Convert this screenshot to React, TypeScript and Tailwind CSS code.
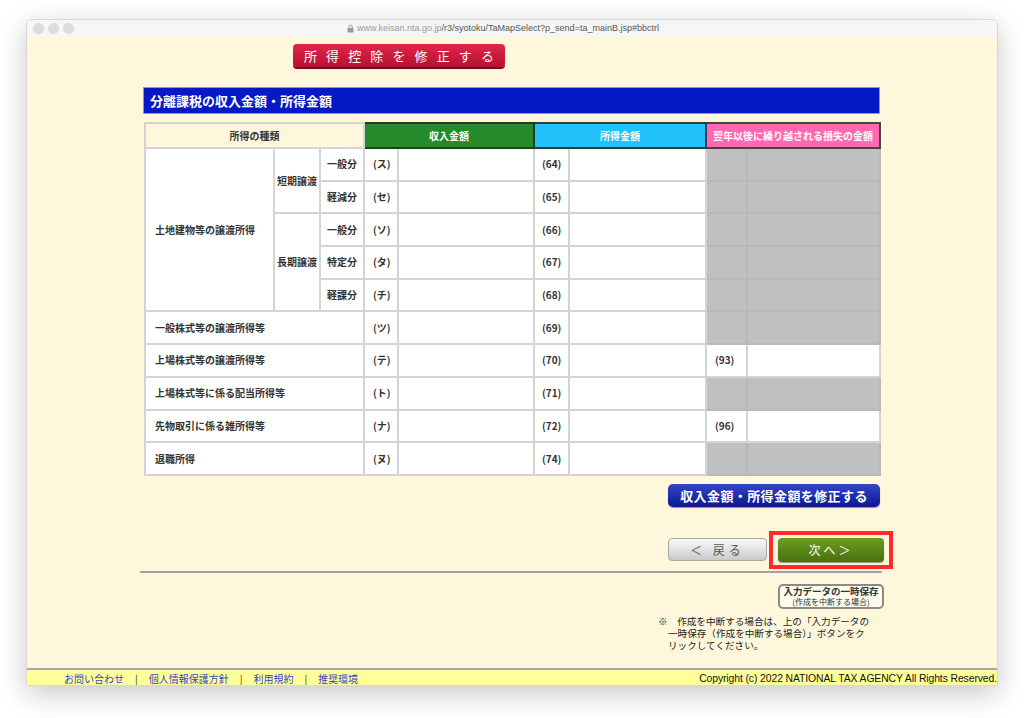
import React from "react";

const jp = "font-['Noto_Sans_CJK_JP','Noto_Sans',sans-serif]";
const cell = "border-2 border-[#d4d4d4] bg-white";
const grayCell = "border-2 border-[#b9b9b9] bg-[#c0c0c0]";
const lbl = "text-[10px] font-bold text-[#333] leading-none";

type Row = {
  code: string;
  num: string;
  loss?: string;
};

function Cells({ code, num, loss }: Row) {
  return (
    <>
      <td className={`${cell} pl-[8px] ${lbl}`}>{code}</td>
      <td className={cell}></td>
      <td className={`${cell} pl-[7px] ${lbl}`}>{num}</td>
      <td className={cell}></td>
      {loss ? (
        <>
          <td className={`${cell} pl-[8px] ${lbl}`}>{loss}</td>
          <td className={cell}></td>
        </>
      ) : (
        <>
          <td className={grayCell}></td>
          <td className={grayCell}></td>
        </>
      )}
    </>
  );
}

export default function App() {
  const rowH = "h-[32.7px]";
  return (
    <div className={`w-[1024px] h-[718px] bg-white pt-[19px] pl-[26px] ${jp}`}>
      <div className="w-[972px] h-[667px] flex flex-col rounded-t-[5px] overflow-hidden border border-[#d8d8d8] shadow-[0_8px_28px_rgba(0,0,0,0.22)]">
        {/* title bar */}
        <div className="h-[17px] bg-[#f6f6f6] flex items-center relative shrink-0">
          <div className="flex gap-[4px] pl-[6px]">
            <span className="w-[11px] h-[11px] rounded-full bg-[#dcdcdc]" />
            <span className="w-[11px] h-[11px] rounded-full bg-[#dcdcdc]" />
            <span className="w-[11px] h-[11px] rounded-full bg-[#dcdcdc]" />
          </div>
          <div className="absolute left-[320px] top-0 h-[17px] flex items-center gap-[3px] font-['Liberation_Sans',sans-serif] text-[9px]">
            <svg width="7" height="9" viewBox="0 0 7 9">
              <rect x="0.5" y="4" width="6" height="4.5" rx="0.8" fill="#9a9a9a" />
              <path d="M1.8 4V2.8a1.7 1.7 0 0 1 3.4 0V4" fill="none" stroke="#9a9a9a" strokeWidth="1" />
            </svg>
            <span>
              <span className="text-[#9a9a9a]">www.keisan.nta.go.jp</span>
              <span className="text-[#555]">/r3/syotoku/TaMapSelect?p_send=ta_mainB.jsp#bbctrl</span>
            </span>
          </div>
        </div>

        {/* content */}
        <div className="flex-1 bg-[#fef7dc] flex flex-col pt-[7px]">
          <div className="ml-[266px] w-[212px] h-[23px] rounded-[4px] bg-gradient-to-b from-[#e0264c] to-[#b80f30] shadow-[0_2px_0_#7a0a20] flex items-center justify-between px-[11px] text-white text-[13px] leading-none whitespace-nowrap">
            {"所得控除を修正する".split("").map((c, i) => (
              <span key={i}>{c}</span>
            ))}
          </div>

          <div className="ml-[116px] mt-[20px] w-[737px] h-[27px] bg-[#0718c6] border border-[#8c96d8] flex items-center pl-[6px] text-white text-[13px] font-bold leading-none">
            分離課税の収入金額・所得金額
          </div>

          <table className="ml-[117px] mt-[8px] w-[735px] table-fixed border-collapse">
            <colgroup>
              <col className="w-[129px]" />
              <col className="w-[46px]" />
              <col className="w-[44px]" />
              <col className="w-[34px]" />
              <col className="w-[136px]" />
              <col className="w-[35px]" />
              <col className="w-[137px]" />
              <col className="w-[41px]" />
              <col className="w-[133px]" />
            </colgroup>
            <tbody>
              <tr className="h-[25px]">
                <td colSpan={3} className={`border-2 border-[#d4d4d4] bg-[#fef7dc] text-center ${lbl}`}>所得の種類</td>
                <td colSpan={2} className="border-2 border-[#243a24] bg-[#268a2a] text-center text-white text-[10px] font-bold leading-none">収入金額</td>
                <td colSpan={2} className="border-2 border-[#2e3a44] bg-[#22c1fc] text-center text-white text-[10px] font-bold leading-none">所得金額</td>
                <td colSpan={2} className="border-2 border-[#4a4048] bg-[#ff69b2] text-center text-white text-[10px] font-bold leading-none">翌年以後に繰り越される損失の金額</td>
              </tr>
              <tr className={rowH}>
                <td rowSpan={5} className={`${cell} pl-[9px] ${lbl}`}>土地建物等の譲渡所得</td>
                <td rowSpan={2} className={`${cell} text-center ${lbl}`}>短期譲渡</td>
                <td className={`${cell} text-center ${lbl}`}>一般分</td>
                <Cells code="(ス)" num="(64)" />
              </tr>
              <tr className={rowH}>
                <td className={`${cell} text-center ${lbl}`}>軽減分</td>
                <Cells code="(セ)" num="(65)" />
              </tr>
              <tr className={rowH}>
                <td rowSpan={3} className={`${cell} text-center ${lbl}`}>長期譲渡</td>
                <td className={`${cell} text-center ${lbl}`}>一般分</td>
                <Cells code="(ソ)" num="(66)" />
              </tr>
              <tr className={rowH}>
                <td className={`${cell} text-center ${lbl}`}>特定分</td>
                <Cells code="(タ)" num="(67)" />
              </tr>
              <tr className={rowH}>
                <td className={`${cell} text-center ${lbl}`}>軽課分</td>
                <Cells code="(チ)" num="(68)" />
              </tr>
              <tr className={rowH}>
                <td colSpan={3} className={`${cell} pl-[9px] ${lbl}`}>一般株式等の譲渡所得等</td>
                <Cells code="(ツ)" num="(69)" />
              </tr>
              <tr className={rowH}>
                <td colSpan={3} className={`${cell} pl-[9px] ${lbl}`}>上場株式等の譲渡所得等</td>
                <Cells code="(テ)" num="(70)" loss="(93)" />
              </tr>
              <tr className={rowH}>
                <td colSpan={3} className={`${cell} pl-[9px] ${lbl}`}>上場株式等に係る配当所得等</td>
                <Cells code="(ト)" num="(71)" />
              </tr>
              <tr className={rowH}>
                <td colSpan={3} className={`${cell} pl-[9px] ${lbl}`}>先物取引に係る雑所得等</td>
                <Cells code="(ナ)" num="(72)" loss="(96)" />
              </tr>
              <tr className={rowH}>
                <td colSpan={3} className={`${cell} pl-[9px] ${lbl}`}>退職所得</td>
                <Cells code="(ヌ)" num="(74)" />
              </tr>
            </tbody>
          </table>

          <div className="ml-[641px] mt-[8px] w-[212px] h-[23px] rounded-[5px] bg-gradient-to-b from-[#3446c8] to-[#0c1690] shadow-[0_1px_1px_rgba(0,0,0,0.4)] flex items-center justify-center text-white text-[13px] font-bold tracking-[0.4px] leading-none">
            収入金額・所得金額を修正する
          </div>

          <div className="ml-[641px] mt-[24px] flex items-center gap-[2px]">
            <div className="w-[99px] h-[23px] rounded-[4px] border border-[#a8a8a8] bg-gradient-to-b from-[#fafafa] to-[#cacaca] flex items-center justify-center text-[#555] text-[12px] tracking-[4px] leading-none">
              ＜ 戻る
            </div>
            <div className="border-4 border-[#ff2b2b] px-[5px] py-[3px]">
              <div className="w-[106px] h-[24px] rounded-[4px] bg-gradient-to-b from-[#6f9e24] to-[#46700e] shadow-[0_1px_1px_rgba(0,0,0,0.4)] flex items-center justify-center text-white text-[12px] tracking-[3px] leading-none">
                次へ＞
              </div>
            </div>
          </div>

          <div className="ml-[113px] mt-[2px] w-[742px] h-[2px] bg-[#a2a2a2]" />

          <div className="ml-[751px] mt-[11px] w-[106px] h-[25px] rounded-[5px] border-2 border-[#8a8a8a] bg-[#fffbea] flex flex-col items-center justify-center text-[#333]">
            <span className="text-[9.5px] font-bold leading-[11px]">入力データの一時保存</span>
            <span className="text-[8px] leading-[10px]">(作成を中断する場合)</span>
          </div>

          <div className="ml-[631px] mt-[6px] text-[9.6px] leading-[12px] text-[#222]">
            <div>※　作成を中断する場合は、上の「入力データの</div>
            <div className="pl-[10px]">一時保存（作成を中断する場合）」ボタンをク</div>
            <div className="pl-[10px]">リックしてください。</div>
          </div>
        </div>

        {/* footer */}
        <div className="shrink-0 h-[2px] bg-[#a6a6a6]" />
        <div className="shrink-0 h-[15px] bg-[#ffff99] flex items-end justify-between overflow-hidden">
          <div className="pl-[37px] flex items-center gap-[11px] text-[10px] leading-[13px] text-[#3344cc]">
            <span>お問い合わせ</span>
            <span className="text-[#333]">|</span>
            <span>個人情報保護方針</span>
            <span className="text-[#333]">|</span>
            <span>利用規約</span>
            <span className="text-[#333]">|</span>
            <span>推奨環境</span>
          </div>
          <div className="font-['Liberation_Sans',sans-serif] text-[10.4px] leading-[13px] text-[#111] whitespace-nowrap tracking-[-0.1px]">
            Copyright (c) 2022 NATIONAL TAX AGENCY All Rights Reserved.
          </div>
        </div>
      </div>
    </div>
  );
}
